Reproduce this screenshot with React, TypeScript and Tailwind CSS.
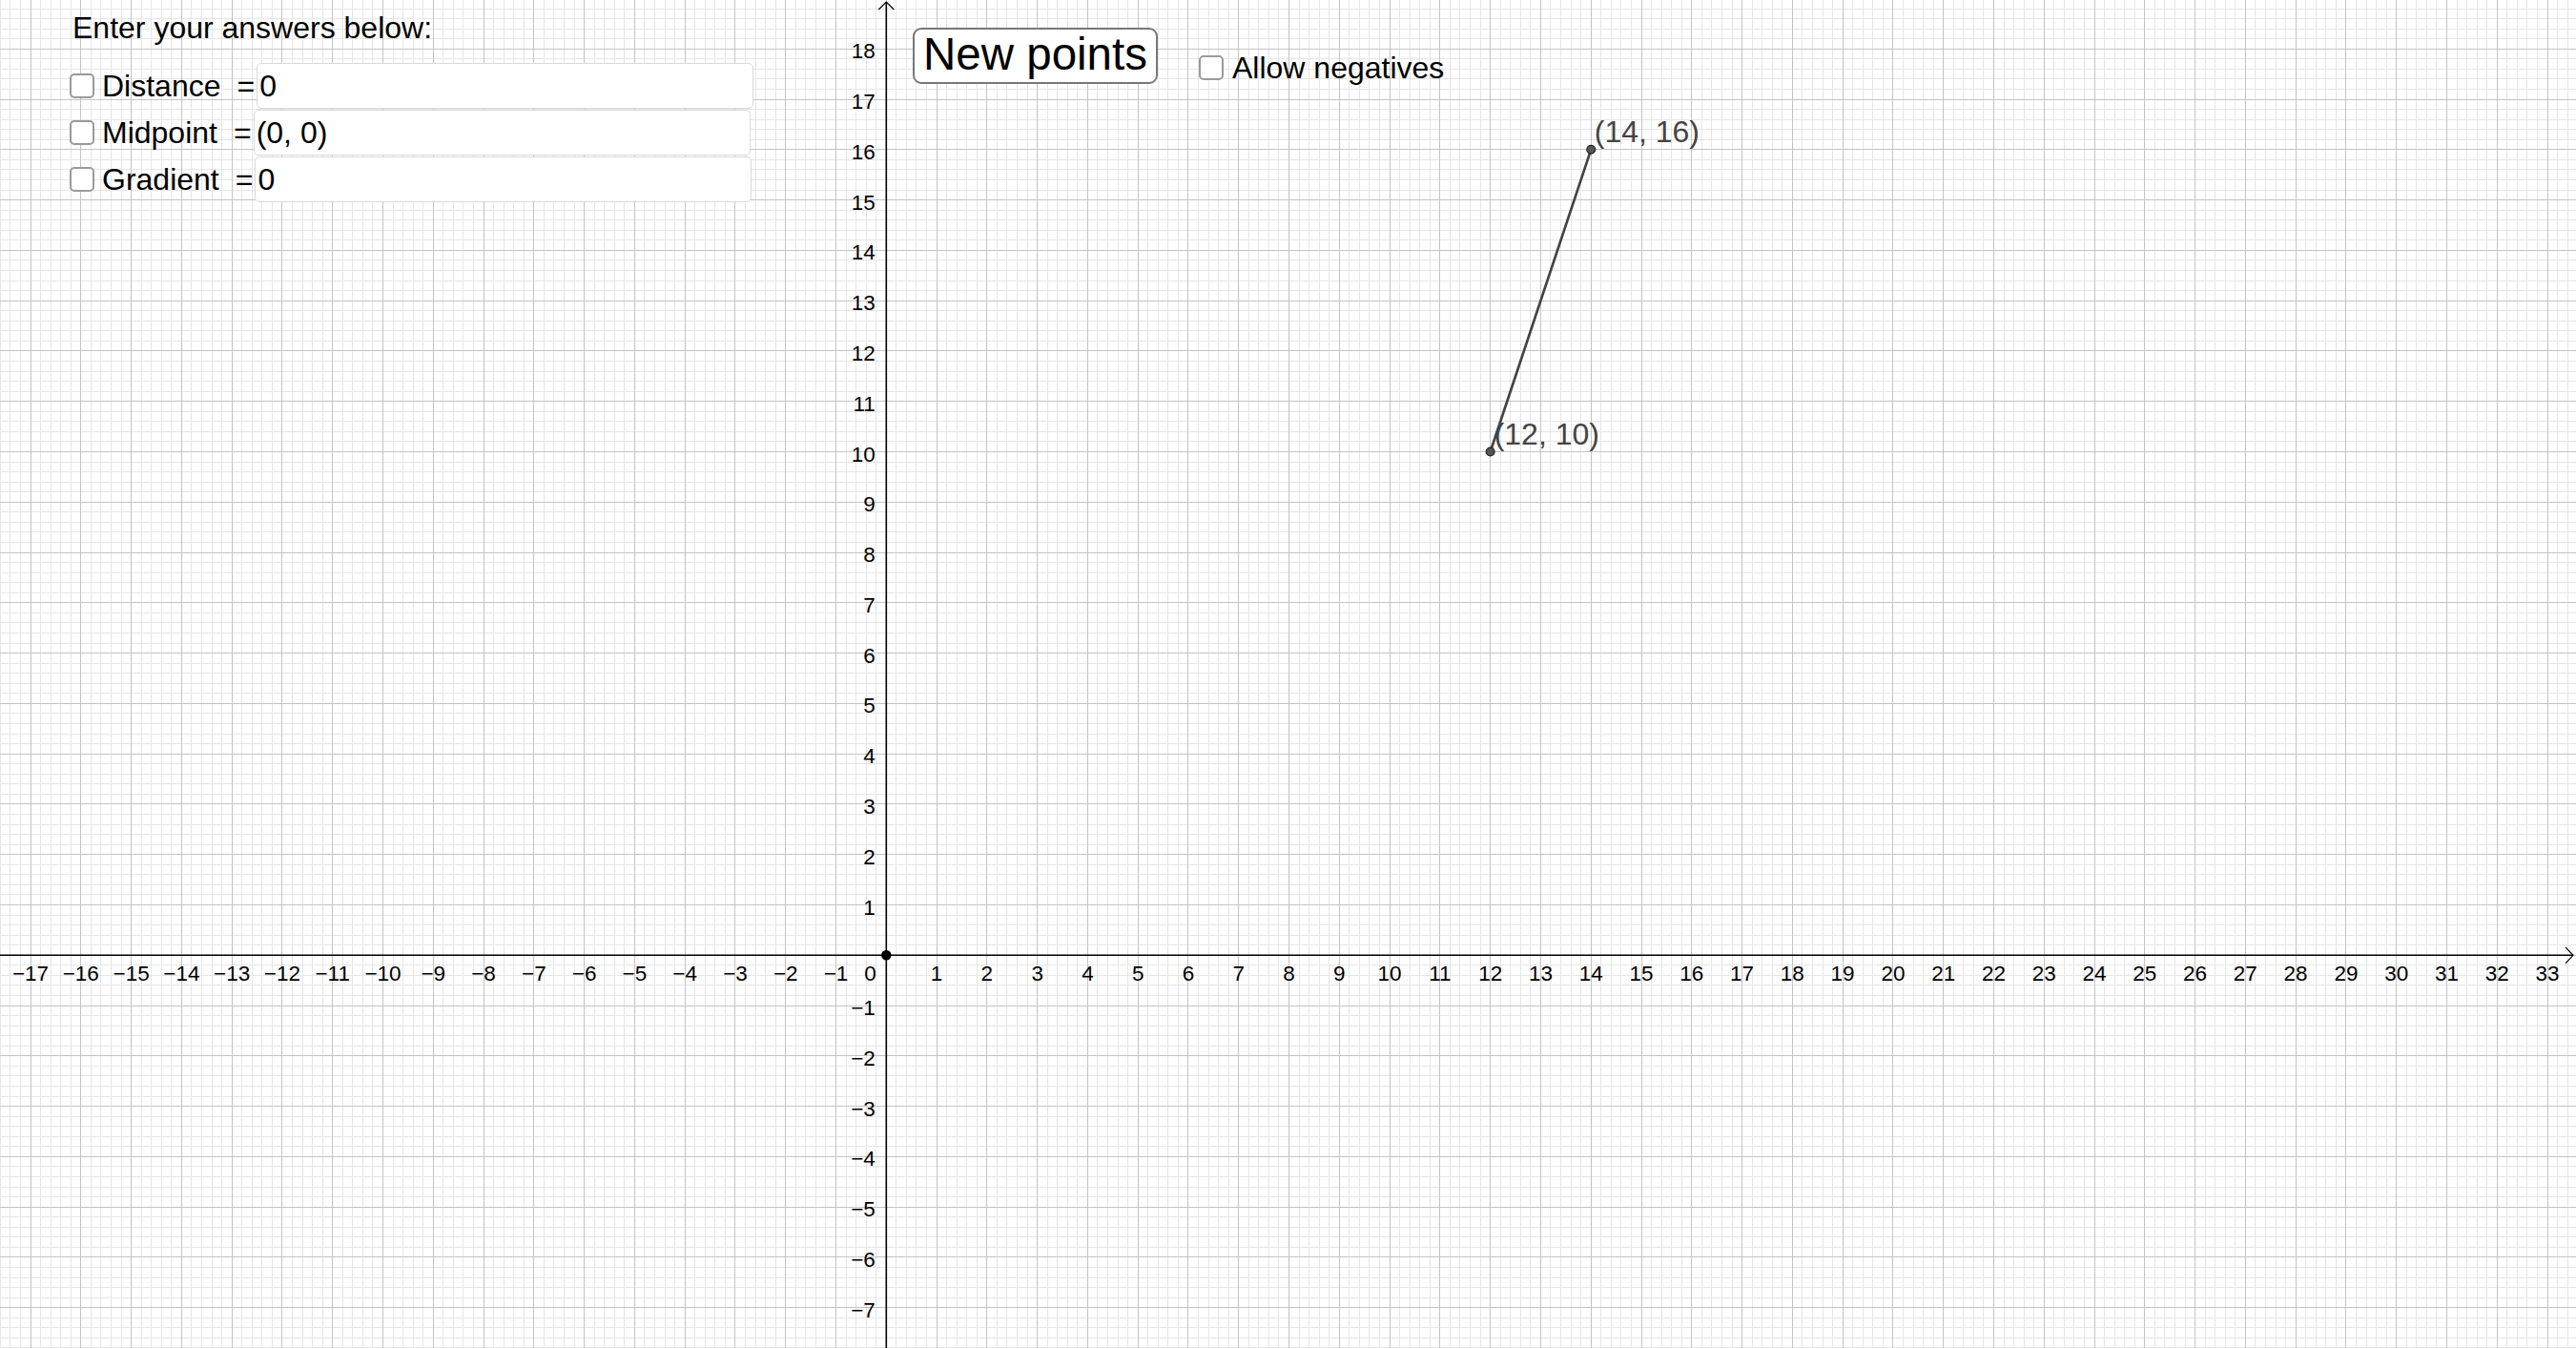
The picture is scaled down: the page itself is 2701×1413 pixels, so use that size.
import React from 'react';

const W = 2701;
const H = 1413;
const U = 52.78;
const OX = 929.3;
const OY = 1001.3;

const minus = (n: number) => (n < 0 ? `\u2212${Math.abs(n)}` : `${n}`);

function Grid() {
  const step = U / 5;
  const minorV: number[] = [];
  const majorV: number[] = [];
  for (let k = Math.ceil(-OX / step); k <= Math.floor((W - OX) / step); k++) {
    const x = OX + k * step;
    if (k % 5 === 0) majorV.push(x);
    else minorV.push(x);
  }
  const minorH: number[] = [];
  const majorH: number[] = [];
  for (let k = Math.ceil(-OY / step); k <= Math.floor((H - OY) / step); k++) {
    const y = OY + k * step;
    if (k % 5 === 0) majorH.push(y);
    else minorH.push(y);
  }

  const xTicks: number[] = [];
  for (let i = -17; i <= 33; i++) if (i !== 0) xTicks.push(i);
  const yTicks: number[] = [];
  for (let i = -7; i <= 18; i++) if (i !== 0) yTicks.push(i);

  const ax = OX + 12 * U;
  const ay = OY - 10 * U;
  const bx = OX + 14 * U;
  const by = OY - 16 * U;

  return (
    <svg width={W} height={H} viewBox={`0 0 ${W} ${H}`} className="block">
      <rect width={W} height={H} fill="#ffffff" />
      {/* minor grid */}
      <g stroke="#e6e6e6" strokeWidth={1} shapeRendering="crispEdges">
        {minorV.map(x => (
          <line key={`mv${x}`} x1={x} y1={0} x2={x} y2={H} />
        ))}
        {minorH.map(y => (
          <line key={`mh${y}`} x1={0} y1={y} x2={W} y2={y} />
        ))}
      </g>
      {/* major grid */}
      <g stroke="#c4c4c4" strokeWidth={1} shapeRendering="crispEdges">
        {majorV.map(x => (
          <line key={`Mv${x}`} x1={x} y1={0} x2={x} y2={H} />
        ))}
        {majorH.map(y => (
          <line key={`Mh${y}`} x1={0} y1={y} x2={W} y2={y} />
        ))}
      </g>

      {/* axes */}
      <g stroke="#000" strokeWidth={1.6} fill="none">
        <line x1={0} y1={OY} x2={W - 3} y2={OY} />
        <line x1={OX} y1={2} x2={OX} y2={H} />
        <polyline points={`${W - 11},${OY - 8.5} ${W - 3},${OY} ${W - 11},${OY + 8.5}`} strokeWidth={1.2} />
        <polyline points={`${OX - 8},${10} ${OX},${2} ${OX + 8},${10}`} strokeWidth={1.2} />
      </g>

      {/* axis numbers */}
      <g fontFamily="'Liberation Sans', Arial, sans-serif" fontSize={22.5} fill="#000">
        {xTicks.map(i => (
          <text key={`xt${i}`} x={OX + i * U} y={OY + 27} textAnchor="middle">
            {minus(i)}
          </text>
        ))}
        {yTicks.map(i => (
          <text key={`yt${i}`} x={OX - 11.5} y={OY - i * U + 10} textAnchor="end">
            {minus(i)}
          </text>
        ))}
        <text x={OX - 10.5} y={OY + 27} textAnchor="end">0</text>
      </g>

      {/* origin */}
      <circle cx={OX} cy={OY} r={5.3} fill="#000" />

      {/* segment and points */}
      <line x1={ax} y1={ay} x2={bx} y2={by} stroke="#444" strokeWidth={2.7} strokeLinecap="round" />
      <circle cx={ax} cy={ay} r={4.4} fill="#555" stroke="#222" strokeWidth={1.2} />
      <circle cx={bx} cy={by} r={4.4} fill="#555" stroke="#222" strokeWidth={1.2} />
      <g fontFamily="'Liberation Sans', Arial, sans-serif" fontSize={32} fill="#444">
        <text x={bx + 3.5} y={by - 7.5}>(14, 16)</text>
        <text x={ax + 4} y={ay - 7.5}>(12, 10)</text>
      </g>
    </svg>
  );
}

function Box() {
  return <div className="w-[26px] h-[26px] shrink-0 rounded-[5px] border-2 border-[#9a9a9a] bg-white" />;
}

const rows = [
  { label: 'Distance', value: '0' },
  { label: 'Midpoint', value: '(0, 0)' },
  { label: 'Gradient', value: '0' },
];

export default function App() {
  return (
    <div className="relative w-[2701px] h-[1413px] overflow-hidden bg-white font-['Liberation_Sans',Arial,sans-serif] text-black">
      <Grid />

      {/* answers panel */}
      <div className="absolute left-[73px] top-[11px] flex flex-col">
        <div className="ml-[3px] text-[32px] leading-[36px]">Enter your answers below:</div>
        <div className="mt-[19px] flex flex-col gap-[1px]">
          {rows.map(r => (
            <div key={r.label} className="flex items-center h-[48px]">
              <Box />
              <span className="ml-[8px] text-[32px] leading-[36px]">{r.label}</span>
              <span className="ml-[17px] text-[32px] leading-[36px]">=</span>
              <div className="ml-[2px] flex items-center w-[521px] h-[48px] rounded-[5px] border border-[#dadada] bg-white pl-[2px] text-[32px] leading-[36px]">
                {r.value}
              </div>
            </div>
          ))}
        </div>
      </div>

      {/* new points button */}
      <button className="absolute left-[957px] top-[29px] w-[257px] h-[59px] flex items-center justify-center pb-[4px] rounded-[9px] border-2 border-[#777] bg-white text-[47.5px] leading-[54px] text-black">
        New points
      </button>

      {/* allow negatives */}
      <div className="absolute left-[1257px] top-[53px] flex items-center gap-[9px]">
        <Box />
        <span className="text-[32px] leading-[36px]">Allow negatives</span>
      </div>
    </div>
  );
}
